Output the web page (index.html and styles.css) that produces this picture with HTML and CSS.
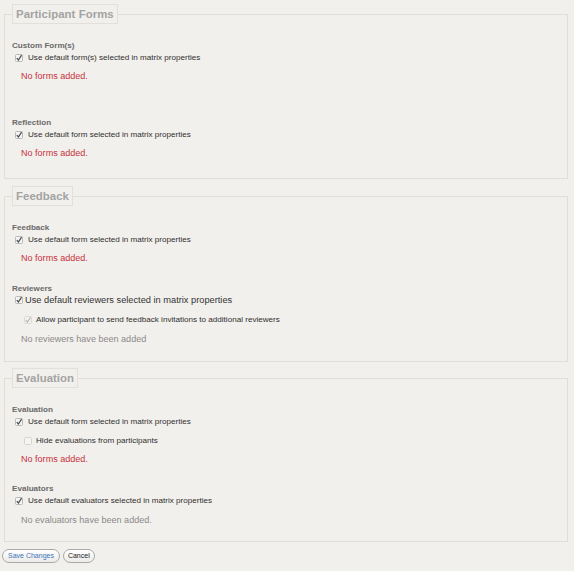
FILE: index.html
```html
<!DOCTYPE html>
<html>
<head>
<meta charset="utf-8">
<link rel="stylesheet" href="styles.css">
</head>
<body>
<form class="page">
  <fieldset class="panel panel-first">
    <legend class="legend">Participant Forms</legend>
    <div class="group group-first">
      <div class="label">Custom Form(s)</div>
      <div class="row"><span class="cb cb-on"><svg viewBox="0 0 8 8" width="8" height="8"><rect x="0.5" y="0.5" width="7" height="7" rx="1" fill="#f4f4f4" stroke="#b9b9b9"/><path d="M1.8 4.2 L3.4 6 L6.6 1.2" fill="none" stroke="#4a4a4a" stroke-width="1.2"/></svg></span><span class="txt">Use default form(s) selected in matrix properties</span></div>
      <div class="empty">No forms added.</div>
    </div>
    <div class="group group-far">
      <div class="label">Reflection</div>
      <div class="row"><span class="cb cb-on"><svg viewBox="0 0 8 8" width="8" height="8"><rect x="0.5" y="0.5" width="7" height="7" rx="1" fill="#f4f4f4" stroke="#b9b9b9"/><path d="M1.8 4.2 L3.4 6 L6.6 1.2" fill="none" stroke="#4a4a4a" stroke-width="1.2"/></svg></span><span class="txt">Use default form selected in matrix properties</span></div>
      <div class="empty">No forms added.</div>
    </div>
  </fieldset>

  <fieldset class="panel panel-second">
    <legend class="legend">Feedback</legend>
    <div class="group group-first">
      <div class="label">Feedback</div>
      <div class="row"><span class="cb cb-on"><svg viewBox="0 0 8 8" width="8" height="8"><rect x="0.5" y="0.5" width="7" height="7" rx="1" fill="#f4f4f4" stroke="#b9b9b9"/><path d="M1.8 4.2 L3.4 6 L6.6 1.2" fill="none" stroke="#4a4a4a" stroke-width="1.2"/></svg></span><span class="txt">Use default form selected in matrix properties</span></div>
      <div class="empty">No forms added.</div>
    </div>
    <div class="group group-mid">
      <div class="label label-tight">Reviewers</div>
      <div class="row row-big"><span class="cb cb-big"><svg viewBox="0 0 8 8" width="8" height="8"><rect x="0.5" y="0.5" width="7" height="7" rx="1" fill="#f4f4f4" stroke="#b9b9b9"/><path d="M1.8 4.2 L3.4 6 L6.6 1.2" fill="none" stroke="#4a4a4a" stroke-width="1.2"/></svg></span><span class="txt txt-big">Use default reviewers selected in matrix properties</span></div>
      <div class="row row-sub"><span class="cb cb-sub"><svg viewBox="0 0 8 8" width="8" height="8"><rect x="0.5" y="0.5" width="7" height="7" rx="1" fill="#f3f1ee" stroke="#dcdad6"/><path d="M1.8 4.2 L3.4 6 L6.6 1.2" fill="none" stroke="#b5b5b5" stroke-width="1.1"/></svg></span><span class="txt">Allow participant to send feedback invitations to additional reviewers</span></div>
      <div class="empty empty-gray">No reviewers have been added</div>
    </div>
  </fieldset>

  <fieldset class="panel panel-third">
    <legend class="legend">Evaluation</legend>
    <div class="group group-first">
      <div class="label">Evaluation</div>
      <div class="row"><span class="cb cb-on"><svg viewBox="0 0 8 8" width="8" height="8"><rect x="0.5" y="0.5" width="7" height="7" rx="1" fill="#f4f4f4" stroke="#b9b9b9"/><path d="M1.8 4.2 L3.4 6 L6.6 1.2" fill="none" stroke="#4a4a4a" stroke-width="1.2"/></svg></span><span class="txt">Use default form selected in matrix properties</span></div>
      <div class="row row-sub row-hide"><span class="cb cb-sub"><svg viewBox="0 0 8 8" width="8" height="8"><rect x="0.5" y="0.5" width="7" height="7" rx="1" fill="#f6f5f3" stroke="#d6d4d0"/></svg></span><span class="txt">Hide evaluations from participants</span></div>
      <div class="empty">No forms added.</div>
    </div>
    <div class="group group-mid2">
      <div class="label">Evaluators</div>
      <div class="row"><span class="cb cb-on"><svg viewBox="0 0 8 8" width="8" height="8"><rect x="0.5" y="0.5" width="7" height="7" rx="1" fill="#f4f4f4" stroke="#b9b9b9"/><path d="M1.8 4.2 L3.4 6 L6.6 1.2" fill="none" stroke="#4a4a4a" stroke-width="1.2"/></svg></span><span class="txt">Use default evaluators selected in matrix properties</span></div>
      <div class="empty empty-gray">No evaluators have been added.</div>
    </div>
  </fieldset>

  <div class="actions">
    <button type="button" class="btn btn-save">Save Changes</button>
    <button type="button" class="btn">Cancel</button>
  </div>
</form>
</body>
</html>
```

FILE: styles.css
```css
html, body {
  margin: 0;
  padding: 0;
  background: #f2f0ec;
}
body {
  font-family: "Liberation Sans", Arial, sans-serif;
  color: #333;
}
.page {
  margin: 0;
  padding: 0;
}
.panel {
  margin: 7px 6px 0 4px;
  padding: 0 7px 13px 7px;
  border: 1px solid #e1deda;
  border-radius: 0;
  min-width: 0;
}
.panel-first {
  margin-top: 4px;
  padding-bottom: 18px;
}
.panel-second {
  padding-bottom: 15px;
}
.panel-third {
  margin-top: 6px;
  padding-bottom: 14px;
}
.legend {
  padding: 1px 3px;
  margin: 0;
  border: 1px solid #e3e0dc;
  font-size: 11.4px;
  line-height: 16px;
  font-weight: bold;
  color: #a3a3a3;
  letter-spacing: 0.05px;
}
.group-first { margin-top: 16px; }
.group-far { margin-top: 34px; }
.group-mid { margin-top: 18px; }
.group-mid2 { margin-top: 17px; }
.label {
  font-size: 8.1px;
  line-height: 12px;
  height: 12px;
  font-weight: bold;
  color: #6a6a6a;
}
.label-tight {
  height: 11px;
  line-height: 11px;
}
.row {
  display: flex;
  align-items: center;
  height: 12px;
}
.cb {
  display: flex;
  width: 8px;
  height: 8px;
  margin-left: 3px;
  margin-right: 5px;
}
.row-big {
  height: 11px;
}
.cb-big {
  margin-right: 2px;
}
.row-sub {
  margin-top: 9px;
}
.cb-sub {
  margin-left: 12px;
  margin-right: 4px;
}
.row-hide {
  margin-top: 7px;
}
.txt {
  font-size: 8.1px;
  line-height: 12px;
  color: #2f2f2f;
  white-space: nowrap;
}
.txt-big {
  font-size: 9.25px;
  color: #333;
}
.empty {
  margin-top: 5px;
  margin-left: 9px;
  height: 14px;
  line-height: 14px;
  font-size: 9.05px;
  color: #c8323c;
}
.empty-gray {
  margin-top: 6px;
  color: #8a8a8a;
}
.actions {
  display: flex;
  gap: 3px;
  margin: 7px 0 0 2px;
}
.btn {
  font-family: "Liberation Sans", Arial, sans-serif;
  font-size: 7px;
  line-height: 12px;
  height: 14px;
  padding: 0 4px;
  border: 1px solid #a9a9a9;
  border-radius: 8px;
  background: linear-gradient(#ffffff, #ecebe9);
  color: #222;
  margin: 0;
}
.btn-save {
  color: #3a73b8;
  padding: 0 5px;
}
```
